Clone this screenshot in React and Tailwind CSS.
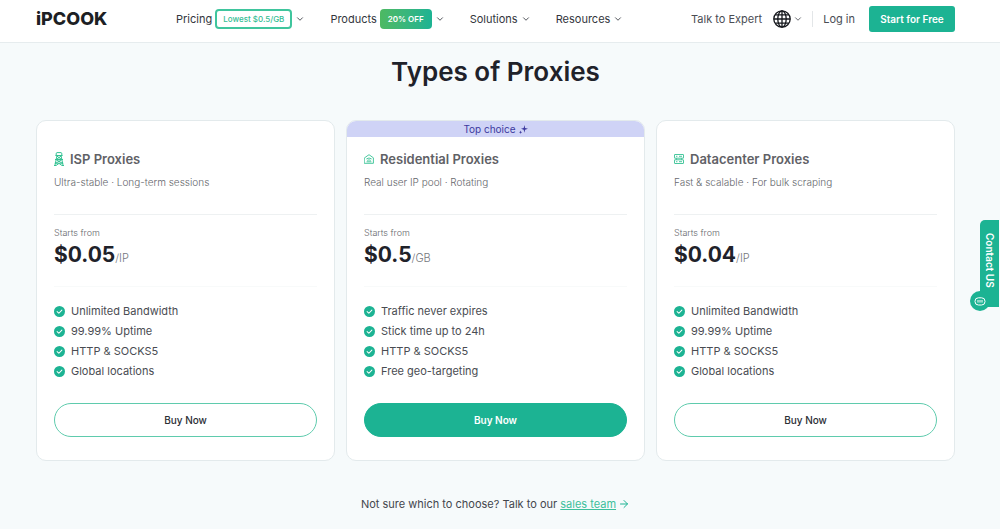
import React from "react";
import { ChevronDown, ArrowRight } from "lucide-react";

const plans = [
  {
    name: "ISP Proxies",
    icon: "tower",
    desc: "Ultra-stable · Long-term sessions",
    price: "$0.05",
    unit: "/IP",
    features: ["Unlimited Bandwidth", "99.99% Uptime", "HTTP & SOCKS5", "Global locations"],
  },
  {
    name: "Residential Proxies",
    icon: "home",
    desc: "Real user IP pool · Rotating",
    price: "$0.5",
    unit: "/GB",
    top: true,
    features: ["Traffic never expires", "Stick time up to 24h", "HTTP & SOCKS5", "Free geo-targeting"],
  },
  {
    name: "Datacenter Proxies",
    icon: "server",
    desc: "Fast & scalable · For bulk scraping",
    price: "$0.04",
    unit: "/IP",
    features: ["Unlimited Bandwidth", "99.99% Uptime", "HTTP & SOCKS5", "Global locations"],
  },
];

const PlanIcon = ({ type }) => {
  if (type === "tower") {
    return (
      <svg viewBox="0 0 10 14" className="w-[10px] h-[14px]" fill="none" stroke="#35c294" strokeWidth="1">
        <path d="M2.2 3.4V1.2L3 .6h4l.8.6v2.2M1.4 3.5h7.2M3 3.5.9 13.5M7 3.5l2.1 10M2.8 4l4.8 3.4M7.2 4 2.4 7.4M1 7.5h8M2.2 7.6l6 3.6M7.8 7.6l-6 3.6M.8 11.2h8.4M2 13.5 5 11.4l3 2.1M0 13.5h2M8 13.5h2" />
      </svg>
    );
  }
  if (type === "home") {
    return (
      <svg viewBox="0 0 10 10" className="w-[10px] h-[10px]" fill="none" stroke="#35c294" strokeWidth=".9" strokeLinejoin="round" strokeLinecap="round">
        <path d="M.6 3.8 5 .7l4.4 3.1v5.5H.6ZM2.7 4.7Q5 3.1 7.3 4.7M3.6 6.2q1.4-.9 2.8 0M3 7.8h4" />
      </svg>
    );
  }
  return (
    <svg viewBox="0 0 10 10" className="w-[10px] h-[10px]" fill="none" stroke="#35c294" strokeWidth=".9">
      <rect x=".5" y=".5" width="9" height="3.7" rx=".3" />
      <rect x=".5" y="5.8" width="9" height="3.7" rx=".3" />
      <path d="M2 2.3h1.4M5 2.3h3M2 7.7h1.4M5 7.7h3M2.4 4.2v1.6M7.6 4.2v1.6" />
    </svg>
  );
};

const Check = () => (
  <svg viewBox="0 0 12 12" className="w-[11px] h-[11px] shrink-0">
    <circle cx="6" cy="6" r="6" fill="#1cb393" />
    <path d="m3.4 6.1 1.9 1.8 3.3-3.4" fill="none" stroke="#fff" strokeWidth="1.1" strokeLinecap="round" strokeLinejoin="round" />
  </svg>
);

const Globe = () => (
  <svg viewBox="0 0 18 18" className="w-[18px] h-[18px]" fill="none" stroke="#15171c" strokeWidth="1.3">
    <circle cx="9" cy="9" r="8.2" />
    <ellipse cx="9" cy="9" rx="4.2" ry="8.2" />
    <path d="M9 .8v16.4M.8 9h16.4M2.2 4.8h13.6M2.2 13.2h13.6" />
  </svg>
);

const Sparkle = () => (
  <svg viewBox="0 0 9 9" className="w-[9px] h-[9px]" fill="#3d3a9e">
    <path d="M5.4 0 6.1 2.9 9 3.8 6.1 4.7 5.4 7.8 4.7 4.7 2 3.8 4.7 2.9ZM1.6 5.6l.4 1.2 1.2.5L2 7.8 1.6 9 1.1 7.8 0 7.3l1.1-.5Z" />
  </svg>
);

const NavItem = ({ label, children }) => (
  <button type="button" className="flex items-center text-[11px] leading-4 text-[#33363d]">
    {label}
    {children}
    <ChevronDown className="w-[10px] h-[10px] ml-[3px]" strokeWidth={2} />
  </button>
);

const Navbar = () => (
  <header className="bg-white border-b border-[#e6ecee] pl-9 pr-[45px] h-[43px] flex items-center pb-1">
    <a href="#" className="w-[140px] text-[18px] leading-5 font-extrabold text-[#1d1f24]">
      iPCOOK
    </a>
    <nav className="flex items-center gap-[25px]">
      <NavItem label="Pricing">
        <span className="ml-[3px] px-[6px] h-5 flex items-center rounded-[4px] border-2 border-[#3fc59d] text-[8px] font-medium text-[#35bd94]">
          Lowest $0.5/GB
        </span>
      </NavItem>
      <NavItem label="Products">
        <span className="ml-[3px] px-2 h-5 flex items-center rounded-[4px] bg-linear-to-r from-[#4db962] to-[#1cb393] text-[8px] font-semibold text-white">
          20% OFF
        </span>
      </NavItem>
      <NavItem label="Solutions" />
      <NavItem label="Resources" />
    </nav>
    <div className="ml-auto flex items-center text-[11px] leading-4 text-[#4a4d54]">
      <a href="#">Talk to Expert</a>
      <button type="button" aria-label="Language" className="ml-[11px] flex items-center">
        <Globe />
        <ChevronDown className="w-[10px] h-[10px] ml-[2px]" strokeWidth={2} />
      </button>
      <span className="w-px h-4 ml-[9px] mr-[10px] bg-[#e3e6e8]" />
      <a href="#">Log in</a>
      <button type="button" className="ml-[14px] h-[26px] w-[86px] rounded-[3px] bg-[#1cb393] text-[10px] font-semibold text-white">
        Start for Free
      </button>
    </div>
  </header>
);

const PlanCard = ({ plan }) => (
  <article className="bg-white rounded-[10px] border border-[#e3eaec] overflow-hidden">
    <div className={plan.top ? "h-4 flex items-center justify-center gap-[3px] bg-[#cfd3f6] text-[10px] text-[#3d3a9e]" : "h-4"}>
      {plan.top && (
        <>
          Top choice <Sparkle />
        </>
      )}
    </div>
    <div className="px-[17px] pt-3 pb-[23px]">
      <h2 className="flex items-center gap-[6px] text-[13px] leading-5 font-semibold text-[#5f6166]">
        <PlanIcon type={plan.icon} />
        {plan.name}
      </h2>
      <p className="mt-[5px] text-[10px] leading-4 font-light text-[#66686d]">{plan.desc}</p>
      <div className="mt-6 border-t border-[#eef1f2] pt-[10px] pb-[14px]">
        <p className="text-[9px] leading-4 font-light text-[#66686d]">Starts from</p>
        <p className="text-[21px] leading-7 font-bold text-[#1f222a]">
          {plan.price}
          <span className="text-[11px] font-light text-[#75777c]">{plan.unit}</span>
        </p>
      </div>
      <ul className="border-t border-[#f8fafa] pt-[14px]">
        {plan.features.map((feature) => (
          <li key={feature} className="flex items-center gap-[6px] text-[11px] leading-5 text-[#494c52]">
            <Check />
            {feature}
          </li>
        ))}
      </ul>
      <button
        type="button"
        className={
          plan.top
            ? "mt-[22px] w-full h-[34px] rounded-full border border-[#1cb393] bg-[#1cb393] text-[10px] font-semibold text-white"
            : "mt-[22px] w-full h-[34px] rounded-full border border-[#5fcbad] bg-white text-[10px] font-medium text-[#2b2e35]"
        }
      >
        Buy Now
      </button>
    </div>
  </article>
);

const App = () => (
  <div className="min-h-screen bg-[#f6fafb] font-['Inter',sans-serif]">
    <Navbar />
    <main className="pl-9 pr-[45px] pt-[13px]">
      <h1 className="text-center text-[26px] leading-8 font-semibold text-[#1f222a]">Types of Proxies</h1>
      <div className="mt-8 grid grid-cols-3 gap-[11px]">
        {plans.map((plan) => (
          <PlanCard key={plan.name} plan={plan} />
        ))}
      </div>
      <p className="mt-[33px] flex items-center justify-center gap-[2px] text-[11px] leading-5 text-[#43464d]">
        <span>
          Not sure which to choose? Talk to our{" "}
          <a href="#" className="underline text-[#3dbf9b]">sales team</a>
        </span>
        <ArrowRight className="w-3 h-3 text-[#1cb393]" strokeWidth={2} />
      </p>
    </main>

    {/* Floating contact tab */}
    <button type="button" className="fixed right-px top-[220px] w-[19px] h-[87px] rounded-tl-[5px] bg-[#1cb393] text-white">
      <span className="[writing-mode:vertical-rl] text-[10px] leading-4 font-semibold">Contact US</span>
      <span className="absolute -left-[10px] bottom-[-4px] w-5 h-5 rounded-full bg-[#1cb393] flex items-center justify-center">
        <svg viewBox="0 0 12 9" className="w-3 h-[9px]" fill="none" stroke="#fff" strokeWidth="1">
          <rect x="1" y=".8" width="10" height="7.2" rx="3.4" />
          <path d="M4 3v2.6M6 3v2.6M8 3v2.6" />
        </svg>
      </span>
    </button>
  </div>
);

export default App;
